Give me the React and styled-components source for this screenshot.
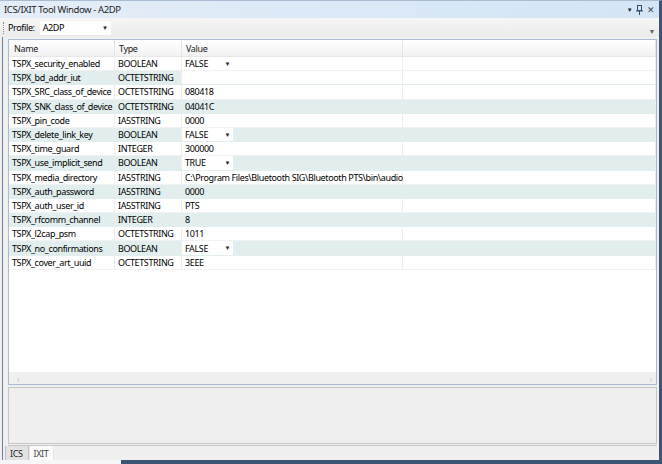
import React from "react";
import styled, { createGlobalStyle } from "styled-components";

const GlobalStyle = createGlobalStyle`
  html, body { margin: 0; padding: 0; background: #ffffff; }
  * { box-sizing: border-box; }
`;

const rows = [
  { name: "TSPX_security_enabled", type: "BOOLEAN", value: "FALSE", combo: true },
  { name: "TSPX_bd_addr_iut", type: "OCTETSTRING", value: "", editing: true },
  { name: "TSPX_SRC_class_of_device", type: "OCTETSTRING", value: "080418" },
  { name: "TSPX_SNK_class_of_device", type: "OCTETSTRING", value: "04041C" },
  { name: "TSPX_pin_code", type: "IA5STRING", value: "0000" },
  { name: "TSPX_delete_link_key", type: "BOOLEAN", value: "FALSE", combo: true },
  { name: "TSPX_time_guard", type: "INTEGER", value: "300000" },
  { name: "TSPX_use_implicit_send", type: "BOOLEAN", value: "TRUE", combo: true },
  { name: "TSPX_media_directory", type: "IA5STRING", value: "C:\\Program Files\\Bluetooth SIG\\Bluetooth PTS\\bin\\audio" },
  { name: "TSPX_auth_password", type: "IA5STRING", value: "0000" },
  { name: "TSPX_auth_user_id", type: "IA5STRING", value: "PTS" },
  { name: "TSPX_rfcomm_channel", type: "INTEGER", value: "8" },
  { name: "TSPX_l2cap_psm", type: "OCTETSTRING", value: "1011" },
  { name: "TSPX_no_confirmations", type: "BOOLEAN", value: "FALSE", combo: true },
  { name: "TSPX_cover_art_uuid", type: "OCTETSTRING", value: "3EEE" },
];

const Window = styled.div`
  width: 662px;
  height: 464px;
  display: flex;
  flex-direction: column;
  background: #f0f0f0;
  border-right: 3px solid #3d5575;
  border-top: 1px solid #a9bcd2;
  font-family: "Noto Sans", "Open Sans", sans-serif;
  font-size: 9px;
  letter-spacing: -0.38px;
  color: #000;
  overflow: hidden;
`;

const TitleBar = styled.div`
  height: 17px;
  flex: 0 0 auto;
  display: flex;
  align-items: center;
  padding: 0 4px 0 4px;
  background: linear-gradient(to right, #e4edf7, #d3e5f6);
  font-size: 9.5px;
  color: #1e1e1e;
`;

const Title = styled.span`
  flex: 1;
`;

const TitleButtons = styled.div`
  display: flex;
  align-items: center;
  gap: 4px;
  color: #3a4a60;
  font-size: 9px;
`;

const ToolBar = styled.div`
  height: 19px;
  flex: 0 0 auto;
  display: flex;
  align-items: center;
  padding: 0 4px 0 3px;
  background: linear-gradient(#f6f6f6, #ebebeb);
`;

const Gripper = styled.div`
  width: 1px;
  height: 12px;
  margin-right: 4px;
  border-left: 1px dotted #8a8a8a;
`;

const ProfileLabel = styled.span`
  margin-right: 5px;
`;

const ProfileCombo = styled.div`
  width: 71px;
  height: 14px;
  background: #fff;
  display: flex;
  align-items: center;
  justify-content: space-between;
  padding: 0 3px 0 3px;
`;

const Overflow = styled.span`
  margin-left: auto;
  font-size: 7px;
  color: #666;
  align-self: flex-end;
  margin-bottom: 1px;
`;

const Content = styled.div`
  flex: 1;
  display: flex;
  flex-direction: column;
  margin-left: 2px;
  border-left: 1px solid #6c7e98;
  padding: 2px 2px 0 5px;
  min-height: 0;
`;

const Grid = styled.div`
  height: 346px;
  flex: 0 0 auto;
  display: flex;
  flex-direction: column;
  background: #fff;
  border: 1px solid #a8bdd3;
`;

const Table = styled.div`
  flex: 1;
  display: grid;
  grid-template-columns: 106px 67px 221px 1fr;
  grid-template-rows: 17px;
  grid-auto-rows: 14.2px;
  align-content: start;
`;

const HeadCell = styled.div`
  display: flex;
  align-items: center;
  padding-left: ${(p) => p.pad || 4}px;
  background: linear-gradient(#ffffff, #f2f2f2);
  border-right: 1px solid #e4e4e4;
  border-bottom: 1px solid #e8e8e8;
  color: #222;
`;

const Cell = styled.div`
  display: flex;
  align-items: center;
  padding-left: ${(p) => p.pad || 3}px;
  background: ${(p) => (p.white ? "#ffffff" : p.alt ? "#e2eeee" : "#ffffff")};
  border-right: 1px solid #ececec;
  border-bottom: 1px solid ${(p) => (p.alt ? "#e2eeee" : "#f2f2f2")};
  white-space: nowrap;
`;

const ValueCell = styled(Cell)`
  padding-left: 0;
`;

const Combo = styled.div`
  width: 51px;
  height: 100%;
  background: #fff;
  display: flex;
  align-items: center;
  justify-content: space-between;
  padding: 0 3px 0 3px;
`;

const Arrow = styled.span`
  font-size: 6px;
  color: #222;
`;

const ValueText = styled.span`
  padding-left: 3px;
`;

const HScroll = styled.div`
  height: 12px;
  flex: 0 0 auto;
  display: flex;
  align-items: center;
  justify-content: space-between;
  padding: 0 4px 0 8px;
  background: #efefef;
  color: #c4c4c4;
  font-size: 9px;
`;

const Description = styled.div`
  height: 57px;
  flex: 0 0 auto;
  margin-top: 2px;
  background: #efefef;
  border: 1px solid #c6c6c6;
`;

const TabStrip = styled.div`
  height: 16px;
  flex: 0 0 auto;
  display: flex;
  align-items: stretch;
  margin-top: 1px;
  border-top: 1px solid #c6c6c6;
  background: #f0f0f0;
`;

const TabArea = styled.div`
  display: flex;
  margin-left: -6px;
  width: 100%;
`;

const Tab = styled.div`
  display: flex;
  align-items: center;
  padding: 0 5px 0 4px;
  background: ${(p) => (p.active ? "#fbfbfb" : "#e2e2e2")};
  border: 1px solid ${(p) => (p.active ? "#e6e6e6" : "#c2c2c2")};
  border-top: none;
  color: ${(p) => (p.active ? "#444" : "#222")};
  font-size: 9px;
  margin-left: ${(p) => (p.first ? 3 : 0)}px;
`;

const TabRest = styled.div`
  flex: 1;
  border-bottom: 1px solid #c6c6c6;
`;

const BottomEdge = styled.div`
  height: 4px;
  flex: 0 0 auto;
  display: flex;
  margin-left: -3px;
`;

const EdgePart = styled.div`
  width: ${(p) => p.w || 0}px;
  flex: ${(p) => (p.w ? "0 0 auto" : "1")};
  background: ${(p) => p.color};
`;

function PinIcon() {
  return (
    <svg width="7" height="10" viewBox="0 0 7 10">
      <rect x="1.5" y="0.5" width="4" height="5" fill="none" stroke="#3a4a60" />
      <line x1="0" y1="6" x2="7" y2="6" stroke="#3a4a60" />
      <line x1="3.5" y1="6" x2="3.5" y2="10" stroke="#3a4a60" />
    </svg>
  );
}

export default function App() {
  return (
    <>
      <GlobalStyle />
      <Window>
        <TitleBar>
          <Title>ICS/IXIT Tool Window - A2DP</Title>
          <TitleButtons>
            <Arrow>▼</Arrow>
            <PinIcon />
            <span>✕</span>
          </TitleButtons>
        </TitleBar>
        <ToolBar>
          <Gripper />
          <ProfileLabel>Profile:</ProfileLabel>
          <ProfileCombo>
            <span>A2DP</span>
            <Arrow>▼</Arrow>
          </ProfileCombo>
          <Overflow>▼</Overflow>
        </ToolBar>
        <Content>
          <Grid>
            <Table>
              <HeadCell pad={5}>Name</HeadCell>
              <HeadCell>Type</HeadCell>
              <HeadCell>Value</HeadCell>
              <HeadCell />
              {rows.map((r, i) => {
                const alt = i % 2 === 1;
                return (
                  <React.Fragment key={r.name}>
                    <Cell alt={alt}>{r.name}</Cell>
                    <Cell alt={alt} pad={3}>{r.type}</Cell>
                    <ValueCell alt={alt} white={r.editing}>
                      {r.combo ? (
                        <Combo>
                          <span>{r.value}</span>
                          <Arrow>▼</Arrow>
                        </Combo>
                      ) : (
                        <ValueText>{r.value}</ValueText>
                      )}
                    </ValueCell>
                    <Cell alt={alt} white={r.editing} />
                  </React.Fragment>
                );
              })}
            </Table>
            <HScroll>
              <span>‹</span>
              <span>›</span>
            </HScroll>
          </Grid>
          <Description />
          <TabStrip>
            <TabArea>
              <Tab first>ICS</Tab>
              <Tab active>IXIT</Tab>
              <TabRest />
            </TabArea>
          </TabStrip>
        </Content>
        <BottomEdge>
          <EdgePart w={124} color="#f4f6f8" />
          <EdgePart color="#3d5575" />
        </BottomEdge>
      </Window>
    </>
  );
}
